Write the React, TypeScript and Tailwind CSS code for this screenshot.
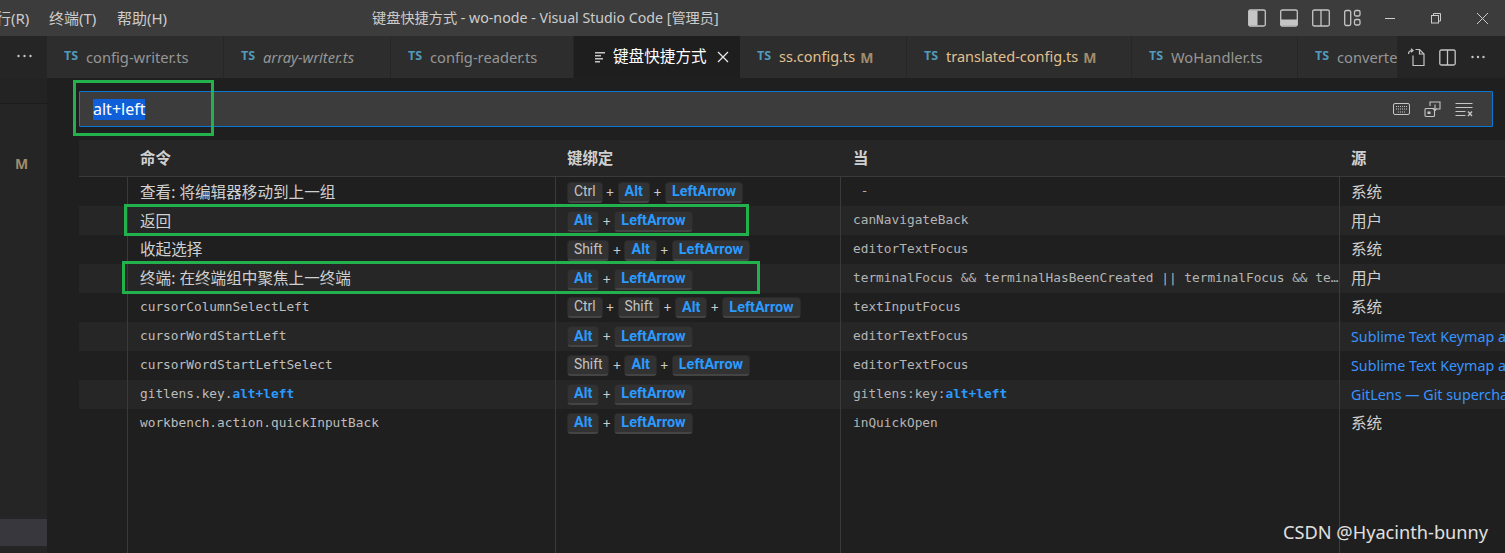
const uiFont = "font-['Noto_Sans','Noto_Sans_CJK_SC',sans-serif]"
const monoFont = "font-['DejaVu_Sans_Mono','Noto_Sans_CJK_SC',monospace]"

interface Tab {
  name: string
  width: number
  italic?: boolean
  modified?: boolean
}

const leftTabs: Tab[] = [
  { name: "config-writer.ts", width: 177 },
  { name: "array-writer.ts", width: 167, italic: true },
  { name: "config-reader.ts", width: 183 },
]

const rightTabs: Tab[] = [
  { name: "ss.config.ts", width: 167, modified: true },
  { name: "translated-config.ts", width: 225, modified: true },
  { name: "WoHandler.ts", width: 166 },
  { name: "converter.ts", width: 100 },
]

interface Row {
  command: string
  commandMono?: boolean
  commandMatch?: string
  keys: string[]
  when: string
  whenMatch?: string
  source: string
  link?: boolean
}

const rows: Row[] = [
  { command: "查看: 将编辑器移动到上一组", keys: ["Ctrl", "Alt", "LeftArrow"], when: " -", source: "系统" },
  { command: "返回", keys: ["Alt", "LeftArrow"], when: "canNavigateBack", source: "用户" },
  { command: "收起选择", keys: ["Shift", "Alt", "LeftArrow"], when: "editorTextFocus", source: "系统" },
  {
    command: "终端: 在终端组中聚焦上一终端",
    keys: ["Alt", "LeftArrow"],
    when: "terminalFocus && terminalHasBeenCreated || terminalFocus && terminalProcessSupported",
    source: "用户",
  },
  { command: "cursorColumnSelectLeft", commandMono: true, keys: ["Ctrl", "Shift", "Alt", "LeftArrow"], when: "textInputFocus", source: "系统" },
  { command: "cursorWordStartLeft", commandMono: true, keys: ["Alt", "LeftArrow"], when: "editorTextFocus", source: "Sublime Text Keymap and Settings Importer", link: true },
  { command: "cursorWordStartLeftSelect", commandMono: true, keys: ["Shift", "Alt", "LeftArrow"], when: "editorTextFocus", source: "Sublime Text Keymap and Settings Importer", link: true },
  { command: "gitlens.key.", commandMono: true, commandMatch: "alt+left", keys: ["Alt", "LeftArrow"], when: "gitlens:key:", whenMatch: "alt+left", source: "GitLens — Git supercharged", link: true },
  { command: "workbench.action.quickInputBack", commandMono: true, keys: ["Alt", "LeftArrow"], when: "inQuickOpen", source: "系统" },
]

const columns = "grid grid-cols-[48px_428px_285px_499px_1fr]"

function TabItem({ tab }: { tab: Tab }) {
  return (
    <div
      className="flex h-full shrink-0 items-center overflow-hidden border-r border-[#262626] bg-[#2d2d2d] pl-[17px]"
      style={{ width: tab.width }}
    >
      <span className="mr-[8px] w-[14px] -translate-y-[1px] text-[12.5px] font-bold leading-none text-[#519aba]">TS</span>
      <span
        className={`whitespace-nowrap ${tab.italic ? "italic" : ""} ${tab.modified ? "text-[14.5px] text-[#e2c08d]" : "text-[14.7px] text-[#969696]"}`}
      >
        {tab.name}
      </span>
      {tab.modified && <span className="ml-[5px] text-[14px] font-bold text-[#a08c6c]">M</span>}
    </div>
  )
}

function Key({ label }: { label: string }) {
  const blue = label !== "Ctrl" && label !== "Shift"
  return (
    <span
      className={`inline-flex h-[21px] items-center rounded-[4px] border border-b-2 border-[#2a2a2a] border-b-[#444444] bg-[#323232] px-[6px] font-['Roboto',sans-serif] leading-none ${
        blue ? "pt-[1px] text-[14.4px] font-bold text-[#2a9bff]" : "text-[13.8px] text-[#c4c4c4]"
      }`}
    >
      {label}
    </span>
  )
}

function Keys({ keys }: { keys: string[] }) {
  return (
    <div className="flex items-center">
      {keys.map((k, i) => (
        <span key={k} className="flex items-center">
          {i > 0 && <span className="w-[15px] text-center text-[14px] text-[#cccccc]">+</span>}
          <Key label={k} />
        </span>
      ))}
    </div>
  )
}

function LayoutIcons() {
  return (
    <div className="flex items-center gap-[14px] text-[#c5c5c5]">
      <svg width="18" height="18" viewBox="0 0 18 18" fill="none" stroke="currentColor" strokeWidth="1.3">
        <rect x="0.7" y="1" width="16.6" height="16" rx="1.5" />
        <rect x="1" y="1.5" width="8.5" height="15" fill="currentColor" stroke="none" />
      </svg>
      <svg width="18" height="18" viewBox="0 0 18 18" fill="none" stroke="currentColor" strokeWidth="1.3">
        <rect x="0.7" y="1" width="16.6" height="16" rx="1.5" />
        <rect x="1" y="10.5" width="16" height="6" fill="currentColor" stroke="none" />
      </svg>
      <svg width="18" height="18" viewBox="0 0 18 18" fill="none" stroke="currentColor" strokeWidth="1.3">
        <rect x="0.7" y="1" width="16.6" height="16" rx="1.5" />
        <path d="M9 1v16" />
      </svg>
      <svg width="17" height="18" viewBox="0 0 17 18" fill="none" stroke="currentColor" strokeWidth="1.3">
        <rect x="0.7" y="1.5" width="6" height="15" rx="1.5" />
        <rect x="10.5" y="1.5" width="5.5" height="5.5" rx="1.5" />
        <rect x="10.5" y="10.5" width="5.5" height="5.5" rx="1.5" />
      </svg>
    </div>
  )
}

function WindowButtons() {
  return (
    <div className="ml-[23px] flex items-center text-[#cccccc]">
      <svg width="12" height="12" viewBox="0 0 12 12" fill="none" stroke="currentColor">
        <path d="M1 6.5h10" />
      </svg>
      <svg className="ml-[34px]" width="12" height="12" viewBox="0 0 12 12" fill="none" stroke="currentColor">
        <rect x="1.5" y="3.5" width="7" height="7.5" />
        <path d="M3.5 3.5V1.5h7v7.5H8.5" />
      </svg>
      <svg className="ml-[34px]" width="13" height="13" viewBox="0 0 13 13" fill="none" stroke="currentColor">
        <path d="M1 1l11 11M12 1L1 12" />
      </svg>
    </div>
  )
}

function TabActions() {
  return (
    <div className="flex h-full flex-1 items-center bg-[#252526] pl-[9px] text-[#c5c5c5]">
      <svg width="19" height="19" viewBox="0 0 19 19" fill="none" stroke="currentColor" strokeWidth="1.2">
        <path d="M6 7.5V17.5h11V6L12.5 1.5H8.5" />
        <path d="M12.5 1.5V6H17" />
        <path d="M1.5 6C1.5 3.5 3 2.5 5.5 2.5M4 .8l2 1.7-2 1.7" />
      </svg>
      <svg className="ml-[13px]" width="17" height="17" viewBox="0 0 17 17" fill="none" stroke="currentColor" strokeWidth="1.3">
        <rect x="0.8" y="1" width="15.4" height="15" rx="1.5" />
        <path d="M8.5 1v15" />
      </svg>
      <svg className="ml-[14px]" width="16" height="16" viewBox="0 0 16 16" fill="currentColor">
        <circle cx="2.5" cy="8" r="1.2" />
        <circle cx="8" cy="8" r="1.2" />
        <circle cx="13.5" cy="8" r="1.2" />
      </svg>
    </div>
  )
}

function SearchActions() {
  return (
    <div className="ml-auto flex items-center gap-[14px] pr-[19px] text-[#c5c5c5]">
      <svg width="17" height="14" viewBox="0 0 17 14" fill="none" stroke="currentColor">
        <rect x="0.5" y="1.5" width="16" height="11" rx="1.5" />
        <path d="M3 4.5h11M3 7h11M5 10h7" strokeDasharray="1 1" />
      </svg>
      <svg className="-mr-[1px]" width="18" height="18" viewBox="0 0 18 18" fill="none" stroke="currentColor" strokeWidth="1.1">
        <rect x="1" y="8.5" width="9.5" height="8" rx="1" />
        <rect x="3.5" y="11.5" width="3" height="2.5" fill="currentColor" stroke="none" />
        <path d="M6 6V2h10v7h-3" />
        <path d="M11 4.5v6M9 8.5l2 2 2-2" />
      </svg>
      <svg width="18" height="15" viewBox="0 0 18 15" fill="none" stroke="currentColor" strokeWidth="1.2">
        <path d="M0.5 1.5h17M0.5 5.5h17M0.5 9.5h10M0.5 13.5h10" />
        <path d="M13 9.5l4 4.5M17 9.5l-4 4.5" strokeWidth="1.4" />
      </svg>
    </div>
  )
}

function Highlight({ text, match }: { text: string; match?: string }) {
  return (
    <>
      {text}
      {match && <span className="font-bold text-[#2a9bff]">{match}</span>}
    </>
  )
}

function TableRow({ row, striped }: { row: Row; striped: boolean }) {
  return (
    <div className={`${columns} h-[28.9px] items-stretch ${striped ? "bg-[#262626]" : ""}`}>
      <div />
      <div className={`flex items-center overflow-hidden whitespace-pre border-l border-[#3a3a3a] pl-[12px] ${row.commandMono ? `${monoFont} pb-[1px] text-[12.8px] text-[#bdbdbd]` : "pt-[1px] text-[15.6px] text-[#d0d0d0]"}`}>
        <Highlight text={row.command} match={row.commandMatch} />
      </div>
      <div className="flex items-center border-l border-[#3a3a3a] pl-[11px] pt-[1px]">
        <Keys keys={row.keys} />
      </div>
      <div className={`${monoFont} truncate whitespace-pre border-l border-[#3a3a3a] pl-[12px] text-[12.8px] leading-[28px] text-[#b4b4b4]`}>
        <Highlight text={row.when} match={row.whenMatch} />
      </div>
      <div className={`flex items-center overflow-hidden whitespace-nowrap border-l border-[#3a3a3a] pl-[11px] pt-[1px] ${row.link ? "text-[14.3px] text-[#3794ff]" : "text-[15.6px] text-[#d0d0d0]"}`}>
        {row.source}
      </div>
    </div>
  )
}

export default function App() {
  return (
    <div className={`${uiFont} relative flex h-[553px] w-[1505px] flex-col overflow-hidden bg-[#1f1f1f] text-[#cccccc]`}>
      {/* Title bar */}
      <div className="flex h-[36px] shrink-0 items-center bg-[#3c3c3c] text-[15px]">
        <span className="-ml-[4px] w-[53px] whitespace-nowrap">行(R)</span>
        <span className="w-[68px] whitespace-nowrap">终端(T)</span>
        <span className="w-[255px] whitespace-nowrap">帮助(H)</span>
        <span className="w-[876px] whitespace-nowrap text-[14.2px]">键盘快捷方式 - wo-node - Visual Studio Code [管理员]</span>
        <LayoutIcons />
        <WindowButtons />
      </div>

      <div className="flex min-h-0 flex-1">
        {/* Sidebar sliver */}
        <div className="flex w-[47px] shrink-0 flex-col bg-[#252526]">
          <div className="flex h-[42px] items-center justify-center pl-[2px] pb-[2px]">
            <svg width="17" height="16" viewBox="0 0 17 16" fill="#c5c5c5">
              <circle cx="2.5" cy="8" r="1.2" />
              <circle cx="8.5" cy="8" r="1.2" />
              <circle cx="14.5" cy="8" r="1.2" />
            </svg>
          </div>
          <div className="h-[26px] border-b border-[#1c1c1c] bg-[#232323]" />
          <div className="mt-[50px] flex h-[18px] items-center justify-center pr-[5px] pl-[1px] text-[14px] font-bold text-[#a08c6c]">M</div>
          <div className="mt-[347px] h-[27px] bg-[#37373d]" />
        </div>

        <div className="flex min-w-0 flex-1 flex-col">
          {/* Tabs */}
          <div className="flex h-[42px] shrink-0 items-center bg-[#2d2d2d]">
            {leftTabs.map((t) => (
              <TabItem key={t.name} tab={t} />
            ))}
            <div className="flex h-full w-[166px] shrink-0 items-center bg-[#1e1e1e] pl-[21px] text-[#ffffff]">
              <svg width="11" height="12" viewBox="0 0 11 12" fill="#c5c5c5">
                <path d="M0 1h10v1.6H0zM0 4h6v1.6H0zM0 7h8v1.6H0zM0 10h5v1.6H0z" />
              </svg>
              <span className="ml-[7px] whitespace-nowrap text-[15.6px]">键盘快捷方式</span>
              <svg className="ml-[10px]" width="12" height="12" viewBox="0 0 12 12" fill="none" stroke="#e8e8e8" strokeWidth="1.3">
                <path d="M1 1l10 10M11 1L1 11" />
              </svg>
            </div>
            {rightTabs.map((t) => (
              <TabItem key={t.name} tab={t} />
            ))}
            <TabActions />
          </div>

          {/* Keybindings editor */}
          <div className="flex min-h-0 flex-1 flex-col">
            <div className="mt-[13px] ml-[32px] mr-[12px] flex h-[36px] shrink-0 items-center rounded-[1px] border border-[#0a78d2] bg-[#3c3c3c] pl-[13px]">
              <span className="bg-[#0e5fd8] text-[16px] leading-[21px] text-[#ffffff]">alt+left</span>
              <SearchActions />
            </div>

            <div className={`${columns} ml-[32px] mt-[13px] h-[37.4px] shrink-0 items-center border-b border-[#3a3a3a] bg-[#262626] text-[15.4px] font-bold text-[#d0d0d0]`}>
              <div />
              <div className="pl-[13px]">命令</div>
              <div className="pl-[12px]">键绑定</div>
              <div className="pl-[13px]">当</div>
              <div className="pl-[12px]">源</div>
            </div>

            <div className="ml-[32px] flex min-h-0 flex-1 flex-col">
              {rows.map((row, i) => (
                <TableRow key={row.command + i} row={row} striped={i % 2 === 1} />
              ))}
              <div className={`${columns} flex-1`}>
                <div />
                <div className="border-l border-[#3a3a3a]" />
                <div className="border-l border-[#3a3a3a]" />
                <div className="border-l border-[#3a3a3a]" />
                <div className="border-l border-[#3a3a3a]" />
              </div>
            </div>
          </div>
        </div>
      </div>

      {/* Green annotation boxes drawn over the screenshot */}
      <div className="absolute left-[73px] top-[80px] h-[56px] w-[141px] border-[3px] border-[#22b14c]" />
      <div className="absolute left-[124px] top-[204px] h-[32px] w-[625px] border-[3px] border-[#22b14c]" />
      <div className="absolute left-[122px] top-[261px] h-[33px] w-[638px] border-[3px] border-[#22b14c]" />

      {/* Watermark */}
      <div className="absolute left-[1283px] top-[519px] whitespace-nowrap text-[18.2px] text-[#e0e0e0]">CSDN @Hyacinth-bunny</div>
    </div>
  )
}
